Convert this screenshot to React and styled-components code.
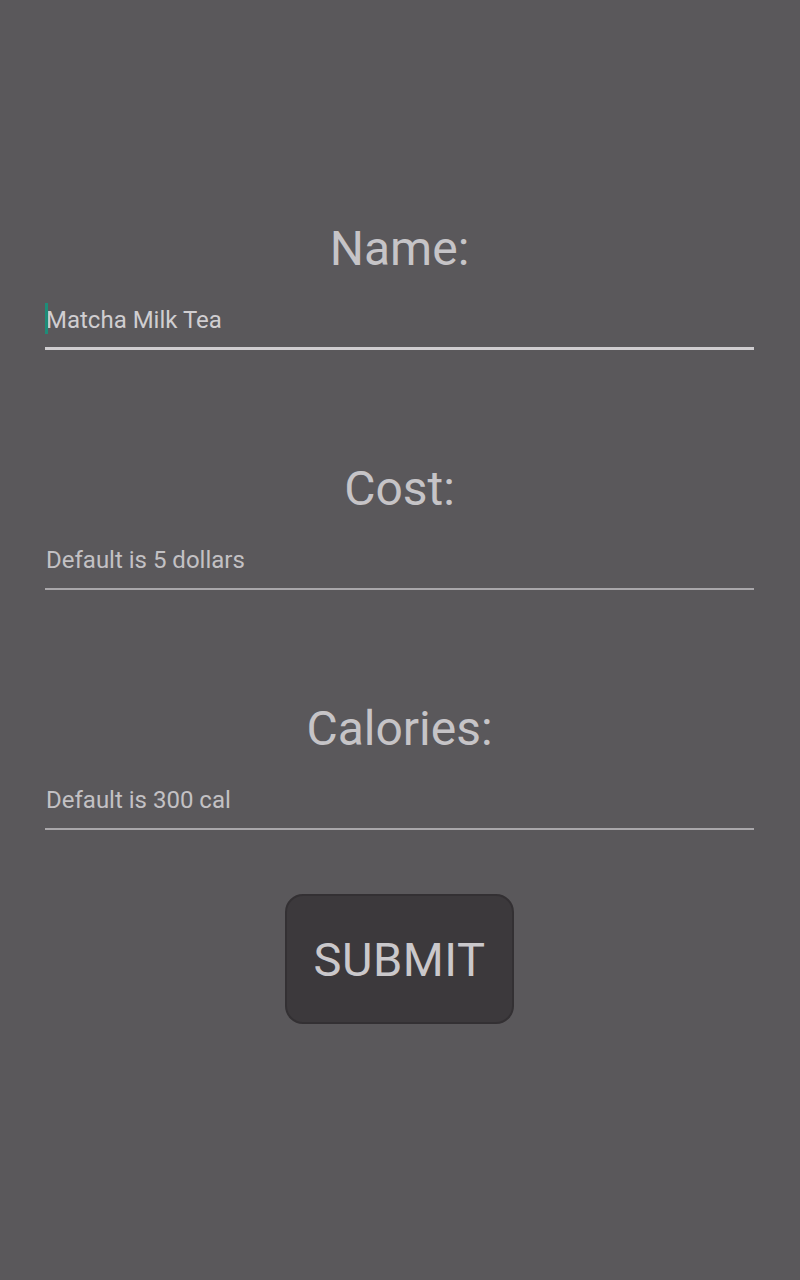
import React, { useState } from "react";
import styled, { createGlobalStyle } from "styled-components";

const GlobalStyle = createGlobalStyle`
  html, body {
    margin: 0;
    padding: 0;
    background: #5a585b;
  }
  * {
    box-sizing: border-box;
  }
`;

const Page = styled.div`
  min-height: 1280px;
  background: #5a585b;
  padding: 221px 46px 0 45px;
  display: flex;
  flex-direction: column;
  font-family: Roboto, "Liberation Sans", sans-serif;
`;

const Field = styled.div`
  display: flex;
  flex-direction: column;
  margin-bottom: ${(p) => (p.$last ? "64px" : "111px")};
`;

const Label = styled.label`
  display: block;
  text-align: center;
  font-size: 48px;
  line-height: 56px;
  color: #c6c4c7;
  margin-bottom: 21px;
`;

const InputWrap = styled.div`
  position: relative;
`;

const Input = styled.input`
  display: block;
  width: 100%;
  height: 52px;
  padding: 2px 0 8px 1px;
  margin: 0;
  border: none;
  border-bottom: ${(p) => (p.$active ? "3px solid #cfcdd0" : "2px solid #a9a7aa")};
  background: transparent;
  outline: none;
  font-family: Roboto, "Liberation Sans", sans-serif;
  font-size: 24px;
  color: #d0ced1;
  caret-color: transparent;

  &::placeholder {
    color: #c3c1c4;
    opacity: 1;
  }
`;

const Caret = styled.span`
  position: absolute;
  left: 0;
  top: 5px;
  width: 3px;
  height: 31px;
  background: #1e8c78;
`;

const ButtonRow = styled.div`
  display: flex;
  justify-content: center;
`;

const SubmitButton = styled.button`
  width: 229px;
  height: 130px;
  border-radius: 18px;
  border: 2px solid #333033;
  background: #3c393c;
  color: #cac8cb;
  font-family: Roboto, "Liberation Sans", sans-serif;
  font-size: 47px;
  letter-spacing: 0.5px;
  cursor: pointer;
  padding: 0;
`;

const App = () => {
  const [name, setName] = useState("Matcha Milk Tea");
  const [cost, setCost] = useState("");
  const [calories, setCalories] = useState("");

  return (
    <>
      <GlobalStyle />
      <Page>
        <Field>
          <Label>Name:</Label>
          <InputWrap>
            <Input
              $active
              value={name}
              onChange={(e) => setName(e.target.value)}
            />
            <Caret />
          </InputWrap>
        </Field>
        <Field>
          <Label>Cost:</Label>
          <InputWrap>
            <Input
              value={cost}
              placeholder="Default is 5 dollars"
              onChange={(e) => setCost(e.target.value)}
            />
          </InputWrap>
        </Field>
        <Field $last>
          <Label>Calories:</Label>
          <InputWrap>
            <Input
              value={calories}
              placeholder="Default is 300 cal"
              onChange={(e) => setCalories(e.target.value)}
            />
          </InputWrap>
        </Field>
        <ButtonRow>
          <SubmitButton type="button">SUBMIT</SubmitButton>
        </ButtonRow>
      </Page>
    </>
  );
};

export default App;
